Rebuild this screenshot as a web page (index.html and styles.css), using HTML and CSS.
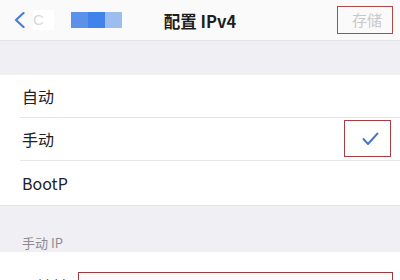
FILE: index.html
```html
<!DOCTYPE html>
<html lang="zh">
<head>
<meta charset="utf-8">
<link rel="stylesheet" href="styles.css">
</head>
<body>
<div class="screen">
  <header class="nav">
    <div class="nav-left">
      <svg class="back" width="11" height="16" viewBox="0 0 11 16"><polyline points="9.5,1 2,8 9.5,15" fill="none" stroke="#4a7cd6" stroke-width="2.2" stroke-linecap="round" stroke-linejoin="round"/></svg>
      <span class="back-text">C</span>
      <span class="blur">
        <span class="b1"></span><span class="b2"></span><span class="b3"></span>
      </span>
    </div>
    <div class="title">配置 IPv4</div>
    <div class="nav-right">
      <span class="save">存储</span>
    </div>
  </header>
  <div class="gap"></div>
  <div class="list">
    <div class="row"><span>自动</span></div>
    <div class="row"><span>手动</span>
      <span class="check-box">
        <svg width="17" height="14" viewBox="0 0 17 14"><polyline points="1.5,7 6,12 15.5,1.5" fill="none" stroke="#4c78c2" stroke-width="2" stroke-linecap="round" stroke-linejoin="round"/></svg>
      </span>
    </div>
    <div class="row last"><span>BootP</span></div>
  </div>
  <div class="section-head"><span>手动 IP</span></div>
  <div class="field-row">
    <span class="field-label">IP地址</span>
    <span class="field-input"></span>
  </div>
</div>
</body>
</html>
```
FILE: styles.css
```css
html, body {
  margin: 0;
  padding: 0;
}
body {
  width: 400px;
  height: 280px;
  overflow: hidden;
  background: #ffffff;
  font-family: "Noto Sans CJK SC", "Noto Sans", sans-serif;
}
.screen {
  display: flex;
  flex-direction: column;
  height: 280px;
}
.nav {
  box-sizing: border-box;
  height: 41px;
  flex: none;
  display: grid;
  grid-template-columns: 1fr auto 1fr;
  align-items: center;
  background: #fafafa;
  border-bottom: 1px solid #e3e3e6;
}
.nav-left {
  display: flex;
  align-items: center;
  padding-left: 14px;
}
.back {
  display: block;
}
.back-text {
  margin-left: 8px;
  font-family: "Liberation Sans", sans-serif;
  font-size: 15px;
  color: #d6d6d8;
  background: #ffffff;
  padding: 0 10px 0 0;
  line-height: 20px;
}
.blur {
  display: flex;
  margin-left: 17px;
  height: 16px;
}
.blur span {
  width: 17px;
  height: 16px;
}
.b1 { background: #5d90e8; }
.b2 { background: #4183ea; }
.b3 { background: #9dbcf0; }
.title {
  font-size: 16.5px;
  font-weight: 600;
  color: #1e1e1e;
  letter-spacing: 0;
  padding-top: 1px;
}
.nav-right {
  justify-self: end;
  margin-right: 7px;
}
.save {
  box-sizing: border-box;
  width: 56px;
  height: 28px;
  display: flex;
  align-items: center;
  justify-content: center;
  padding-left: 4px;
  border: 1px solid #b04a4a;
  font-size: 15px;
  color: #c9c9cc;
  margin-top: -1px;
}
.gap {
  height: 34px;
  flex: none;
  background: #efeff4;
}
.list {
  background: #ffffff;
  border-bottom: 1px solid #e2e2e5;
}
.row {
  box-sizing: border-box;
  height: 43px;
  margin-left: 20px;
  padding-left: 2px;
  padding-right: 9px;
  display: flex;
  align-items: center;
  border-bottom: 1px solid #e6e6e9;
  font-size: 16px;
  color: #222222;
}
.row.last {
  border-bottom: none;
  height: 44px;
}
.check-box {
  margin-left: auto;
  box-sizing: border-box;
  width: 47px;
  height: 37px;
  border: 1px solid #a83c40;
  display: flex;
  align-items: center;
  justify-content: center;
  padding-left: 6px;
  padding-top: 1px;
  margin-top: -2px;
}
.check-box svg {
  display: block;
}
.section-head {
  height: 46px;
  flex: none;
  background: #efeff4;
  display: flex;
  align-items: flex-end;
  padding-left: 22px;
  padding-bottom: 1px;
  box-sizing: border-box;
  font-size: 13px;
  color: #8c8c91;
  line-height: 17px;
}
.field-row {
  display: flex;
  align-items: flex-start;
  padding: 20px 7px 0 22px;
  background: #ffffff;
}
.field-label {
  width: 56px;
  font-size: 16px;
  color: #222222;
  margin-top: 3px;
  line-height: 22px;
}
.field-input {
  flex: 1;
  height: 30px;
  box-sizing: border-box;
  border: 1px solid #9e3a40;
  background: #fff8f8;
}
```
